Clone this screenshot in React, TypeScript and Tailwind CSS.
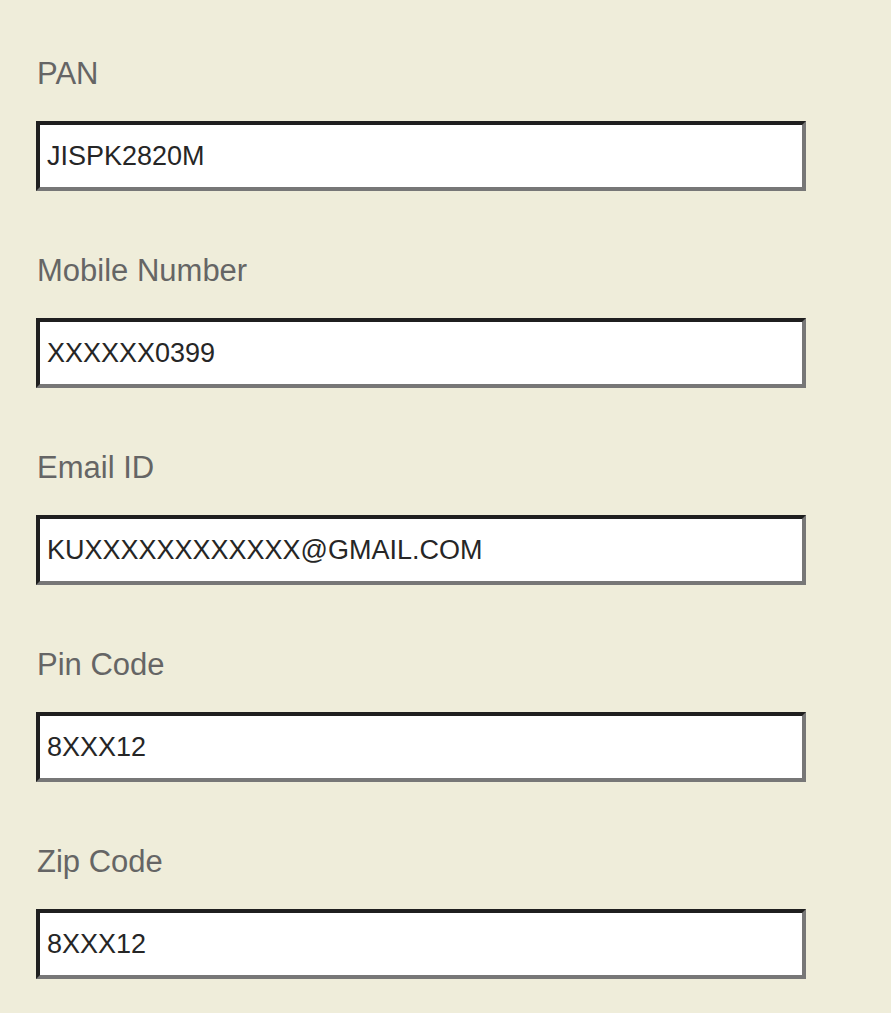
const fields = [
  { label: "PAN", value: "JISPK2820M" },
  { label: "Mobile Number", value: "XXXXXX0399" },
  { label: "Email ID", value: "KUXXXXXXXXXXXX@GMAIL.COM" },
  { label: "Pin Code", value: "8XXX12" },
  { label: "Zip Code", value: "8XXX12" },
];

export default function App() {
  return (
    <div
      className="min-h-screen bg-[#efedda] px-9 pt-14"
      style={{ fontFamily: '"Liberation Sans", Arial, sans-serif' }}
    >
      <div className="flex flex-col gap-[62px]">
        {fields.map((f) => (
          <div key={f.label} className="flex flex-col gap-[29px]">
            <label className="text-[31px] leading-[36px] text-[#656565] pl-px">
              {f.label}
            </label>
            <div className="w-[770px] h-[70px] bg-white border-4 border-t-[#1f1f1f] border-l-[#1f1f1f] border-b-[#777777] border-r-[#777777] flex items-center pl-[7px]">
              <span className="text-[27px] text-[#262626]">{f.value}</span>
            </div>
          </div>
        ))}
      </div>
    </div>
  );
}
